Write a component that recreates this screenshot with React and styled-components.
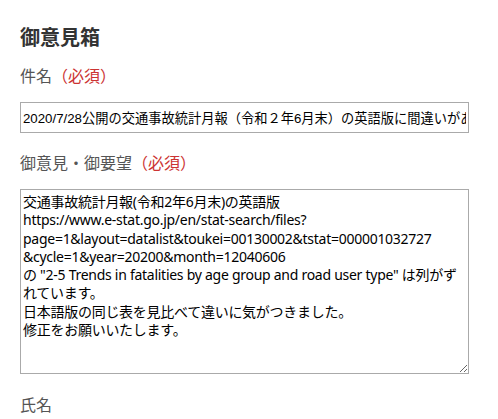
import React from "react";
import styled, { createGlobalStyle } from "styled-components";

const GlobalStyle = createGlobalStyle`
  body {
    margin: 0;
    background: #fff;
    font-family: "Noto Sans CJK JP", "Noto Sans", sans-serif;
  }
`;

const Page = styled.div`
  padding: 23px 20px 0 20px;
  display: flex;
  flex-direction: column;
  width: 449px;
`;

const Heading = styled.h2`
  margin: 0;
  font-size: 20px;
  line-height: 28px;
  font-weight: 700;
  color: #333;
`;

const Field = styled.div`
  display: flex;
  flex-direction: column;
  margin-top: ${(p) => p.$top}px;
`;

const Label = styled.label`
  font-size: 16px;
  line-height: 24px;
  color: #555;
  margin-bottom: ${(p) => p.$gap}px;
`;

const Required = styled.span`
  color: #cc3333;
`;

const TextInput = styled.input`
  box-sizing: border-box;
  width: 449px;
  height: 31px;
  margin: 0;
  padding: 0 2px;
  border: 1px solid #aaa;
  border-radius: 0;
  font-family: "Liberation Sans", "Noto Sans CJK JP", sans-serif;
  font-size: 13.25px;
  color: #000;
  outline: none;
`;

const TextArea = styled.textarea`
  box-sizing: border-box;
  width: 449px;
  height: 185px;
  margin: 0;
  padding: 3px 2px;
  border: 1px solid #aaa;
  border-radius: 0;
  font-family: "Noto Sans", "Noto Sans CJK JP", sans-serif;
  font-size: 14px;
  letter-spacing: -0.27px;
  line-height: 18.3px;
  color: #000;
  overflow: hidden;
  white-space: pre;
  outline: none;
`;

const subject =
  "2020/7/28公開の交通事故統計月報（令和２年6月末）の英語版に間違いがあります";

const message = [
  "交通事故統計月報(令和2年6月末)の英語版",
  "https://www.e-stat.go.jp/en/stat-search/files?",
  "page=1&layout=datalist&toukei=00130002&tstat=000001032727",
  "&cycle=1&year=20200&month=12040606",
  'の "2-5 Trends in fatalities by age group and road user type" は列がず',
  "れています。",
  "日本語版の同じ表を見比べて違いに気がつきました。",
  "修正をお願いいたします。",
].join("\n");

export default function App() {
  return (
    <>
      <GlobalStyle />
      <Page>
        <Heading>御意見箱</Heading>
        <Field $top={12}>
          <Label $gap={15}>
            件名<Required>（必須）</Required>
          </Label>
          <TextInput type="text" defaultValue={subject} />
        </Field>
        <Field $top={17}>
          <Label $gap={15}>
            御意見・御要望<Required>（必須）</Required>
          </Label>
          <TextArea wrap="off" defaultValue={message} />
        </Field>
        <Field $top={18}>
          <Label $gap={0}>氏名</Label>
        </Field>
      </Page>
    </>
  );
}
